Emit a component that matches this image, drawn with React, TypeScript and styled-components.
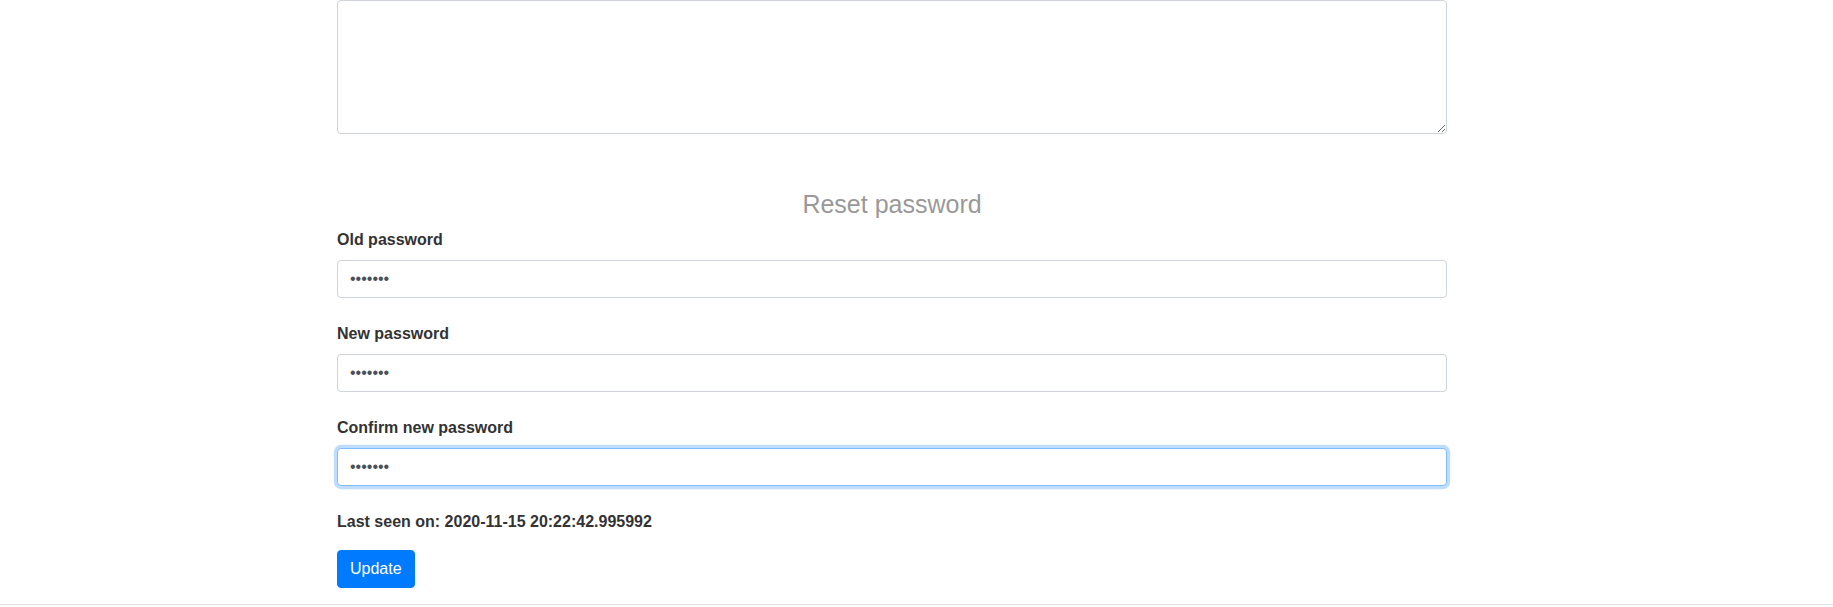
import React from "react";
import styled, { createGlobalStyle, css } from "styled-components";

const GlobalStyle = createGlobalStyle`
  html, body {
    margin: 0;
    padding: 0;
    background: #ffffff;
  }
  body {
    font-family: "Liberation Sans", Arial, sans-serif;
    font-size: 16px;
    line-height: 1.5;
    color: #333333;
  }
  * { box-sizing: border-box; }
`;

const Page = styled.div`
  display: flex;
  flex-direction: column;
  width: 100%;
`;

const Container = styled.main`
  display: flex;
  flex-direction: column;
  width: 1110px;
  margin-left: 337px;
`;

const TextArea = styled.textarea`
  display: block;
  width: 100%;
  height: 134px;
  padding: 6px 12px;
  border: 1px solid #ced4da;
  border-radius: 4px;
  font-family: inherit;
  font-size: 16px;
  color: #495057;
  background: #fff;
  resize: vertical;
  outline: none;
  margin: 0 0 55px 0;
`;

const Heading = styled.h3`
  margin: 0 0 9px 0;
  font-size: 25px;
  font-weight: 400;
  line-height: 30px;
  text-align: center;
  color: #999999;
`;

const FormGroup = styled.div`
  display: flex;
  flex-direction: column;
  margin-bottom: 24px;
`;

const Label = styled.label`
  display: block;
  font-size: 16px;
  font-weight: 700;
  line-height: 24px;
  color: #333333;
  margin-bottom: 8px;
`;

const Input = styled.input<{ $focused?: boolean }>`
  display: block;
  width: 100%;
  height: 38px;
  padding: 6px 12px;
  font-family: inherit;
  font-size: 16px;
  line-height: 1.5;
  color: #495057;
  background: #fff;
  border: 1px solid #ced4da;
  border-radius: 4px;
  outline: none;
  ${(p) =>
    p.$focused &&
    css`
      border-color: #80bdff;
      box-shadow: 0 0 0 3.2px rgba(0, 123, 255, 0.25);
    `}
`;

const LastSeen = styled.p`
  margin: 0 0 16px 0;
  font-weight: 700;
  line-height: 24px;
  color: #333333;
`;

const ButtonRow = styled.div`
  display: flex;
  margin-bottom: 16px;
`;

const Button = styled.button`
  display: inline-block;
  height: 38px;
  padding: 6px 12px;
  font-family: inherit;
  font-size: 16px;
  line-height: 24px;
  color: #fff;
  background: #007bff;
  border: 1px solid #007bff;
  border-radius: 4px;
  cursor: pointer;
`;

const Footer = styled.footer`
  width: 100%;
  border-top: 1px solid #dee2e6;
  height: 20px;
`;

const fields = [
  { id: "old", label: "Old password", focused: false },
  { id: "new", label: "New password", focused: false },
  { id: "confirm", label: "Confirm new password", focused: true },
];

export default function App() {
  return (
    <Page>
      <GlobalStyle />
      <Container>
        <TextArea />
        <Heading>Reset password</Heading>
        {fields.map((f) => (
          <FormGroup key={f.id}>
            <Label htmlFor={f.id}>{f.label}</Label>
            <Input
              id={f.id}
              type="password"
              defaultValue="1234567"
              readOnly
              $focused={f.focused}
            />
          </FormGroup>
        ))}
        <LastSeen>Last seen on: 2020-11-15 20:22:42.995992</LastSeen>
        <ButtonRow>
          <Button type="button">Update</Button>
        </ButtonRow>
      </Container>
      <Footer />
    </Page>
  );
}
